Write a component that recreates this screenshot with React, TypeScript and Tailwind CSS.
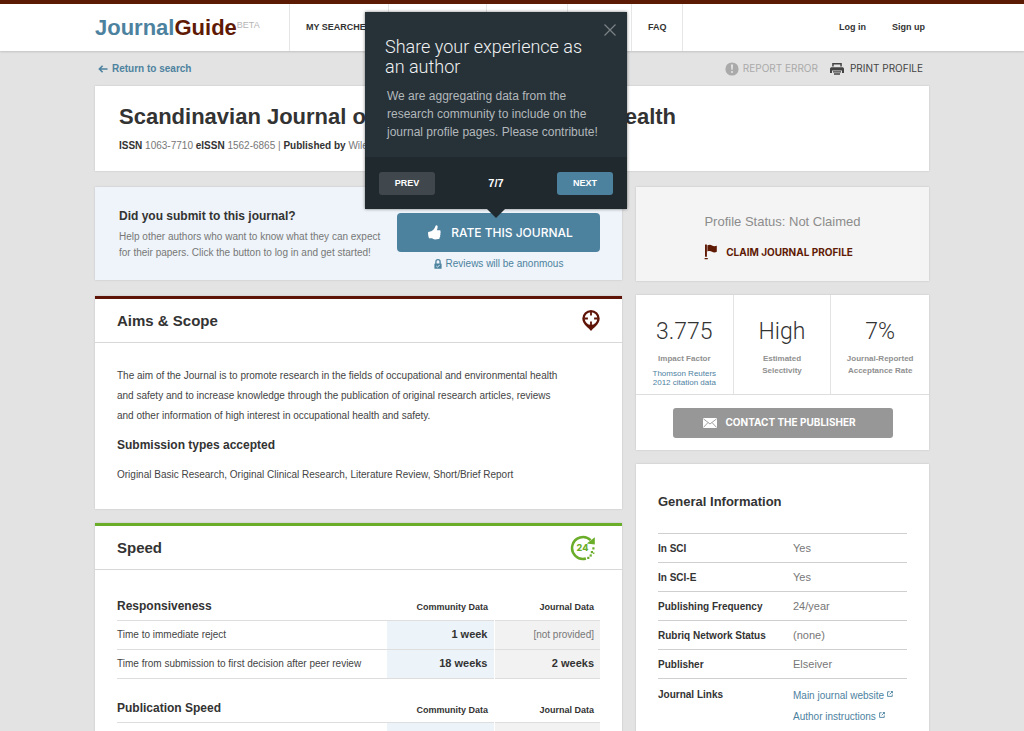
import type { ReactNode } from "react";

type SpeedRow = {
  label: string;
  community: string;
  journal: string | null;
};

type SpeedGroup = {
  title: string;
  rows: SpeedRow[];
};

const navItems = ["MY SEARCHES", "MY JOURNALS", "FEATURES", "TOOLS", "FAQ"];

const speedGroups: SpeedGroup[] = [
  {
    title: "Responsiveness",
    rows: [
      { label: "Time to immediate reject", community: "1 week", journal: null },
      {
        label: "Time from submission to first decision after peer review",
        community: "18 weeks",
        journal: "2 weeks",
      },
    ],
  },
  {
    title: "Publication Speed",
    rows: [
      { label: "Time from acceptance to publication", community: "6 weeks", journal: null },
    ],
  },
];

const generalInfo = [
  { label: "In SCI", value: "Yes" },
  { label: "In SCI-E", value: "Yes" },
  { label: "Publishing Frequency", value: "24/year" },
  { label: "Rubriq Network Status", value: "(none)" },
  { label: "Publisher", value: "Elseiver" },
];

const journalLinks = ["Main journal website", "Author instructions"];

function ArrowLeftIcon() {
  return (
    <svg viewBox="0 0 10 8" className="h-2 w-2.5" fill="none" stroke="currentColor" strokeWidth="1.6">
      <path d="M9.5 4H1.5M4.6 0.8L1.4 4l3.2 3.2" />
    </svg>
  );
}

function ErrorIcon() {
  return (
    <svg viewBox="0 0 14 14" className="h-3.5 w-3.5">
      <circle cx="7" cy="7" r="6.6" fill="currentColor" />
      <path d="M5.9 2.6h2.2l-.4 5.2H6.3z" fill="#e3e3e3" />
      <circle cx="7" cy="10" r="1.1" fill="#e3e3e3" />
    </svg>
  );
}

function PrinterIcon() {
  return (
    <svg viewBox="0 0 14 12" className="h-3 w-3.5" fill="currentColor">
      <path d="M2.2 0h9.6v3.6h-1.5V1.5H3.7v2.1H2.2z" />
      <path d="M1 4.2h12l1 1.2V10h-2V7.4H2V10H0V5.4z" />
      <path d="M3 8.2h8v1.3H3zM4 10.3h6v1.4H4z" />
    </svg>
  );
}

function ThumbIcon() {
  return (
    <svg viewBox="0 0 13 15" className="h-[15px] w-[13px]" fill="currentColor">
      <path d="M0.2 6.9L3.2 6.3C4.9 5.4 6.6 3.8 7.4 1.2C7.8 0.1 9.2 0.1 9.5 1.1C9.9 2.3 9.4 4 8.9 5.2L11.8 5.2C12.7 5.3 12.8 6.5 12.3 6.9C12.9 7.3 12.8 8.4 12.2 8.7C12.7 9.2 12.6 10.2 12 10.5C12.4 11 12.3 12 11.6 12.3C11.8 13.1 11.4 13.9 10.6 14.1L7 14.5C5.7 14.5 4.8 13.7 3.8 13.3L1 13.2C0.2 11.2 -0.2 9 0.2 6.9Z" />
    </svg>
  );
}

function LockIcon() {
  return (
    <svg viewBox="0 0 8 10" className="h-2.5 w-2">
      <path d="M1.9 5V2.8a2.1 2.1 0 0 1 4.2 0V5" fill="none" stroke="currentColor" strokeWidth="1.3" />
      <rect x="0.4" y="4.4" width="7.2" height="5.4" rx="0.6" fill="currentColor" />
      <path d="M2.3 7l1.2 1.2 2.2-2.3" fill="none" stroke="#eef4f9" strokeWidth="0.9" />
    </svg>
  );
}

function FlagIcon() {
  return (
    <svg viewBox="0 0 14 16" className="h-4 w-3.5" fill="currentColor">
      <path d="M1 0.4h1.9v12.4H1zM0.6 14h3.2v1.3H0.6z" />
      <path d="M3.4 1.2C5.4 0.3 7 0.6 8 1.4C8.9 2.1 10.6 2.6 12.8 1.8V7.8C11 8.8 9.2 8.5 8 7.7C6.8 7 5.2 6.7 3.4 7.4Z" />
    </svg>
  );
}

function EnvelopeIcon() {
  return (
    <svg viewBox="0 0 14 10" className="h-2.5 w-3.5">
      <rect width="14" height="10" rx="0.6" fill="currentColor" />
      <path d="M0.4 0.8L7 6l6.6-5.2M0.5 9.4l4.4-4.8M13.5 9.4L9.1 4.6" fill="none" stroke="#979797" strokeWidth="0.9" />
    </svg>
  );
}

function TargetPinIcon() {
  return (
    <svg viewBox="0 0 18 21" className="h-[21px] w-[18px]">
      <path
        d="M9 0a8.7 8.7 0 0 1 8.7 8.6c0 3.4-1.9 5.6-4.2 7.8C11.7 18 10 19.4 9 21C8 19.4 6.3 18 4.5 16.4C2.2 14.2 0.3 12 0.3 8.6A8.7 8.7 0 0 1 9 0Z"
        fill="#5f1408"
      />
      <circle cx="9" cy="8.5" r="6.3" fill="#fff" />
      <path d="M9 1.8v3.6M9 11.6v3.6M2.3 8.5h3.6M12.1 8.5h3.6" stroke="#5f1408" strokeWidth="1.8" />
    </svg>
  );
}

function Clock24Icon() {
  return (
    <svg viewBox="0 0 26 26" className="mr-1 h-[26px] w-[26px]">
      <path d="M15.9 23.5A10.9 10.9 0 1 1 20.6 5.2" fill="none" stroke="#6aad28" strokeWidth="2.5" />
      <path d="M24.8 2.2V9.6L16.8 8.6Z" fill="#6aad28" />
      <g fill="#6aad28">
        <rect x="22.3" y="12.3" width="2.2" height="2.2" />
        <rect x="20.8" y="16" width="2.2" height="2.2" />
        <rect x="23" y="17.5" width="1.4" height="1.4" />
        <rect x="19.6" y="19.4" width="2.2" height="2.2" />
        <rect x="17.2" y="21.8" width="2.2" height="2.2" />
      </g>
      <text x="12.5" y="16.3" textAnchor="middle" fontSize="9" fontWeight="800" fill="#6aad28" fontFamily="Inter, sans-serif">
        24
      </text>
    </svg>
  );
}

function ExternalIcon() {
  return (
    <svg viewBox="0 0 8 8" className="mb-1 inline h-1.5 w-1.5" fill="none" stroke="currentColor" strokeWidth="1.2">
      <path d="M3.5 1H0.8v6.2H7V4.5M5 0.7h2.4v2.4M7.2 0.8L3.6 4.4" />
    </svg>
  );
}

function Header() {
  return (
    <header className="border-t-4 border-[#5b1a03] bg-white shadow-[0_1px_2px_rgba(0,0,0,0.15)]">
      <div className="mx-auto flex h-[47px] max-w-[834px] items-stretch">
        <a href="#" className="flex w-[194px] items-center text-[22px] font-bold">
          <span className="text-[#4d829f]">Journal</span>
          <span className="text-[#5f1a05]">Guide</span>
          <span className="mb-1 text-[9px] font-normal text-[#b5b5b5]">BETA</span>
        </a>
        <nav className="flex border-l border-[#e6e6e6] text-[9px] font-bold text-[#333]">
          {navItems.map((item) => (
            <a key={item} href="#" className="flex items-center border-r border-[#e6e6e6] px-4">
              {item}
            </a>
          ))}
        </nav>
        <div className="ml-auto flex items-center gap-[26px] pr-1 text-[9px] font-bold text-[#333]">
          <a href="#">Log in</a>
          <a href="#">Sign up</a>
        </div>
      </div>
    </header>
  );
}

function TourPopup() {
  return (
    <div
      role="dialog"
      aria-label="Share your experience as an author"
      className="absolute bottom-full -left-8 z-10 mb-1 w-[262px] bg-[#263138] shadow-[0_0_3px_rgba(0,0,0,0.5)]"
    >
      <button type="button" aria-label="Close" className="absolute top-3 right-[11px] text-[#7c8386]">
        <svg viewBox="0 0 12 12" className="h-3 w-3" stroke="currentColor" strokeWidth="1.2">
          <path d="M0.5 0.5l11 11M11.5 0.5l-11 11" />
        </svg>
      </button>
      <div className="h-[145px] px-5 pt-[25px]">
        <h2 className="pr-4 font-[Roboto] text-[18px] leading-5 font-light text-[#f0f2f3]">
          Share your experience as an author
        </h2>
        <p className="mt-2.5 pl-0.5 text-[12px] leading-[18px] text-[#b3b8bb]">
          We are aggregating data from the research community to include on the journal profile pages. Please
          contribute!
        </p>
      </div>
      <div className="flex h-[52px] items-center justify-between bg-[#20292e] px-3.5 text-[9px] font-bold text-white">
        <button type="button" className="h-[23px] w-14 rounded-[3px] bg-[#41484d] pt-0.5">
          PREV
        </button>
        <span className="text-[11px]">7/7</span>
        <button type="button" className="h-[23px] w-14 rounded-[3px] bg-[#4d829f] pt-0.5">
          NEXT
        </button>
      </div>
      <svg viewBox="0 0 18 9" className="absolute top-full left-1/2 h-[9px] w-[18px] -translate-x-1/2">
        <path d="M0 0h18L9 9z" fill="#20292e" />
      </svg>
    </div>
  );
}

function Panel({ title, icon, accent, children }: { title: string; icon: ReactNode; accent: string; children: ReactNode }) {
  return (
    <section className={`border-t-3 bg-white shadow-[0_0_2px_rgba(0,0,0,0.15)] ${accent}`}>
      <div className="flex h-11 items-center justify-between border-b border-[#d8d8d8] px-[22px]">
        <h2 className="pt-0.5 text-[15px] font-bold">{title}</h2>
        {icon}
      </div>
      {children}
    </section>
  );
}

function SpeedTable({ group }: { group: SpeedGroup }) {
  return (
    <table className="mb-4 w-full text-[11px]">
      <thead>
        <tr className="h-7 border-b border-[#dedede] text-right text-[9px]">
          <th className="text-left text-[12px]">{group.title}</th>
          <th className="w-[107px] pt-1 pr-1.5">Community Data</th>
          <th className="w-[106px] pt-1 pr-1.5">Journal Data</th>
        </tr>
      </thead>
      <tbody>
        {group.rows.map((row) => (
          <tr key={row.label} className="h-[29px] border-b border-[#dedede] text-right">
            <td className="text-left text-[10px] text-[#444]">{row.label}</td>
            <td className="border-r border-white bg-[#edf4f9] pr-1.5 font-bold">{row.community}</td>
            <td className="bg-[#f2f2f2] pr-1.5">
              {row.journal ? (
                <b>{row.journal}</b>
              ) : (
                <span className="text-[10px] text-[#777]">[not provided]</span>
              )}
            </td>
          </tr>
        ))}
      </tbody>
    </table>
  );
}

function Stat({ value, children }: { value: string; children: ReactNode }) {
  return (
    <div className="h-[99px] pt-[22px] text-center text-[8px] leading-3 font-bold text-[#909090]">
      <p className="mb-1.5 font-[Roboto] text-[23px] leading-[30px] font-light text-[#333]">{value}</p>
      {children}
    </div>
  );
}

export default function App() {
  return (
    <div className="min-h-screen bg-[#e3e3e3] font-['Liberation_Sans',Arial,sans-serif] text-[#333]">
      <Header />

      <main className="mx-auto max-w-[834px]">
        <div className="flex h-[35px] items-center justify-between pr-1.5 pl-[3px] text-[10px]">
          <a href="#" className="flex items-center gap-1 font-bold text-[#4d829f]">
            <ArrowLeftIcon />
            Return to search
          </a>
          <div className="flex items-center gap-3 font-[Inter]">
            <button type="button" className="flex items-center gap-1 text-[#aaa]">
              <ErrorIcon />
              REPORT ERROR
            </button>
            <button type="button" className="flex items-center gap-1.5 text-[#444]">
              <PrinterIcon />
              PRINT PROFILE
            </button>
          </div>
        </div>

        <section className="h-[85px] bg-white px-6 pt-[18px] shadow-[0_0_2px_rgba(0,0,0,0.15)]">
          <h1 className="text-[22px] leading-[26px] font-bold">Scandinavian Journal of Work, Environment &amp; Health</h1>
          <p className="mt-2 text-[10px] leading-4 text-[#777]">
            <b className="text-[#333]">ISSN</b> 1063-7710 <b className="text-[#333]">eISSN</b> 1562-6865 |{" "}
            <b className="text-[#333]">Published by</b> Wiley
          </p>
        </section>

        <div className="mt-4 flex items-start gap-3.5">
          <div className="min-w-0 flex-1">
            <section className="flex h-[93px] bg-[#eef4f9] pr-[22px] pl-6 shadow-[0_0_2px_rgba(0,0,0,0.15)]">
              <div className="flex-1 pt-5">
                <h2 className="text-[12px] leading-[18px] font-bold">Did you submit to this journal?</h2>
                <p className="mt-1 text-[10px] leading-4 text-[#777]">
                  Help other authors who want to know what they can expect for their papers. Click the button to log in
                  and get started!
                </p>
              </div>
              <div className="ml-3 w-[203px] pt-[26px] text-[#4d829f]">
                <div className="relative">
                  <TourPopup />
                  <button
                    type="button"
                    className="flex h-[39px] w-full items-center justify-center gap-2.5 rounded bg-[#4d829f] pl-1 font-[Inter] text-[12px] font-medium text-white"
                  >
                    <ThumbIcon />
                    RATE THIS JOURNAL
                  </button>
                </div>
                <p className="mt-1 flex items-center justify-center gap-1 text-[10px]">
                  <LockIcon />
                  Reviews will be anonmous
                </p>
              </div>
            </section>

            <div className="mt-4 space-y-3.5">
              <Panel title="Aims & Scope" icon={<TargetPinIcon />} accent="border-[#5f1408]">
                <div className="px-[22px] pt-[23px] pb-6 text-[10px] leading-5 text-[#444]">
                  <p className="pr-8">
                    The aim of the Journal is to promote research in the fields of occupational and environmental health
                    and safety and to increase knowledge through the publication of original research articles, reviews
                    and other information of high interest in occupational health and safety.
                  </p>
                  <h3 className="mt-[9px] mb-2.5 text-[12px] font-bold text-[#333]">Submission types accepted</h3>
                  <p>Original Basic Research, Original Clinical Research, Literature Review, Short/Brief Report</p>
                </div>
              </Panel>

              <Panel title="Speed" icon={<Clock24Icon />} accent="border-[#6aad28]">
                <div className="px-[22px] pt-[22px] pb-1">
                  {speedGroups.map((group) => (
                    <SpeedTable key={group.title} group={group} />
                  ))}
                </div>
              </Panel>
            </div>
          </div>

          <aside className="w-[293px] space-y-3.5">
            <section className="flex h-[94px] flex-col items-center bg-[#f4f4f4] pt-[25px] shadow-[0_0_2px_rgba(0,0,0,0.15)]">
              <p className="text-[13px] leading-5 text-[#8c8c8c]">Profile Status: Not Claimed</p>
              <a
                href="#"
                className="mt-3 flex items-center gap-2 pr-2 font-[Inter] text-[10px] font-bold text-[#5f1a05]"
              >
                <FlagIcon />
                CLAIM JOURNAL PROFILE
              </a>
            </section>

            <section className="bg-white shadow-[0_0_2px_rgba(0,0,0,0.15)]">
              <div className="grid grid-cols-3 divide-x divide-[#e3e3e3] border-b border-[#dedede]">
                <Stat value="3.775">
                  <p>Impact Factor</p>
                  <a href="#" className="mt-1 block leading-[9px] font-normal text-[#4d829f]">
                    Thomson Reuters
                    <br />
                    2012 citation data
                  </a>
                </Stat>
                <Stat value="High">
                  <p>
                    Estimated
                    <br />
                    Selectivity
                  </p>
                </Stat>
                <Stat value="7%">
                  <p>
                    Journal-Reported
                    <br />
                    Acceptance Rate
                  </p>
                </Stat>
              </div>
              <div className="flex h-[55px] items-center justify-center">
                <button
                  type="button"
                  className="flex h-[30px] w-[220px] items-center justify-center gap-2 rounded-[3px] bg-[#979797] pr-1.5 font-[Inter] text-[10px] font-bold text-white"
                >
                  <EnvelopeIcon />
                  CONTACT THE PUBLISHER
                </button>
              </div>
            </section>

            <section className="bg-white px-[22px] pt-7 pb-8 shadow-[0_0_2px_rgba(0,0,0,0.15)]">
              <h2 className="mb-[21px] text-[13px] leading-5 font-bold">General Information</h2>
              <table className="w-full text-left text-[11px] text-[#777]">
                <tbody>
                  {generalInfo.map((item) => (
                    <tr key={item.label} className="h-[29px] border-t border-[#cfcfcf]">
                      <th className="w-[135px] text-[10px] text-[#333]">{item.label}</th>
                      <td>{item.value}</td>
                    </tr>
                  ))}
                  <tr className="border-t border-[#cfcfcf] align-top">
                    <th className="pt-2 text-[10px] text-[#333]">Journal Links</th>
                    <td className="pt-1.5 text-[10px] leading-[21px] text-[#4d829f]">
                      {journalLinks.map((link) => (
                        <a key={link} href="#" className="block">
                          {link} <ExternalIcon />
                        </a>
                      ))}
                    </td>
                  </tr>
                </tbody>
              </table>
            </section>
          </aside>
        </div>
      </main>
    </div>
  );
}
